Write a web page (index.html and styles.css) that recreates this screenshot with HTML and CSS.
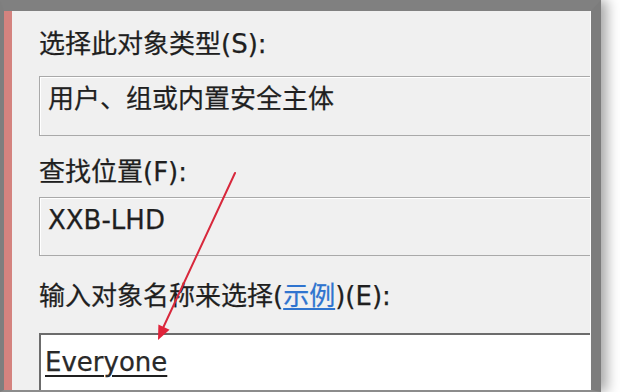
FILE: index.html
```html
<!DOCTYPE html>
<html lang="zh-CN">
<head>
<meta charset="utf-8">
<title>选择用户或组</title>
<link rel="stylesheet" href="styles.css">
</head>
<body>
<div class="stage">
  <div class="window">
    <div class="content">
      <div class="label label-1">选择此对象类型(S):</div>
      <div class="field field-1">用户、组或内置安全主体</div>
      <div class="label label-2">查找位置(F):</div>
      <div class="field field-2">XXB-LHD</div>
      <div class="label label-3">输入对象名称来选择(<span class="link">示例</span>)(E):</div>
      <div class="input"><span class="name">Everyone</span></div>
    </div>
  </div>
  <svg class="arrow" width="620" height="392" viewBox="0 0 620 392">
    <line x1="235" y1="173" x2="163" y2="328" stroke="#d8283c" stroke-width="2" stroke-linecap="round"/>
    <polygon points="158,340 169.5,329.8 158.4,324.6" fill="#e0233a"/>
  </svg>
</div>
</body>
</html>
```

FILE: styles.css
```css
html, body {
  margin: 0;
  padding: 0;
  background: #ffffff;
  overflow: hidden;
}

.stage {
  position: relative;
  width: 620px;
  height: 392px;
  overflow: hidden;
}

.window {
  box-sizing: border-box;
  width: 601px;
  height: 392px;
  border-top: 11px solid #808080;
  border-left: 4px solid #7e7e7e;
  border-right: 10px solid #7c7c7c;
  border-bottom: 2px solid #8c8c8c;
  box-shadow: 6px 0 12px rgba(0, 0, 0, 0.35);
  background: #f0f0f0;
}

.content {
  box-sizing: border-box;
  height: 100%;
  border-left: 8px solid #d4837f;
  border-right: 1px solid #fbfbfb;
  padding: 18px 0 0 27px;
  overflow: hidden;
  font-family: "DejaVu Sans", "Noto Sans CJK SC", sans-serif;
  font-size: 26px;
  color: #1f1f1f;
  -webkit-text-stroke: 0.25px #1f1f1f;
}

.label {
  height: 30px;
  line-height: 30px;
  white-space: nowrap;
}

.label-2 { margin-top: 21px; }
.label-3 { margin-top: 25px; }

.field {
  box-sizing: border-box;
  height: 60px;
  border: 1px solid #a9a9a9;
  border-right: none;
  box-shadow: inset 0 1px 0 #ffffff, inset 1px 0 0 #ffffff;
  padding: 7px 8px;
  line-height: 30px;
  white-space: nowrap;
}

.field-1 { margin-top: 17px; }
.field-2 { margin-top: 10px; height: 59px; }

.link {
  color: #2f74cf;
  -webkit-text-stroke: 0.25px #2f74cf;
  text-decoration: underline;
  text-underline-offset: 3px;
}

.input {
  box-sizing: border-box;
  margin-top: 22px;
  height: 120px;
  border: 2px solid #6c6c6c;
  border-right: none;
  background: #ffffff;
  padding: 12px 4px;
  line-height: 30px;
}

.name {
  text-decoration: underline;
  text-underline-offset: 4px;
  text-decoration-thickness: 2px;
  color: #2a2a2a;
}

.arrow {
  position: absolute;
  left: 0;
  top: 0;
  pointer-events: none;
}
```
